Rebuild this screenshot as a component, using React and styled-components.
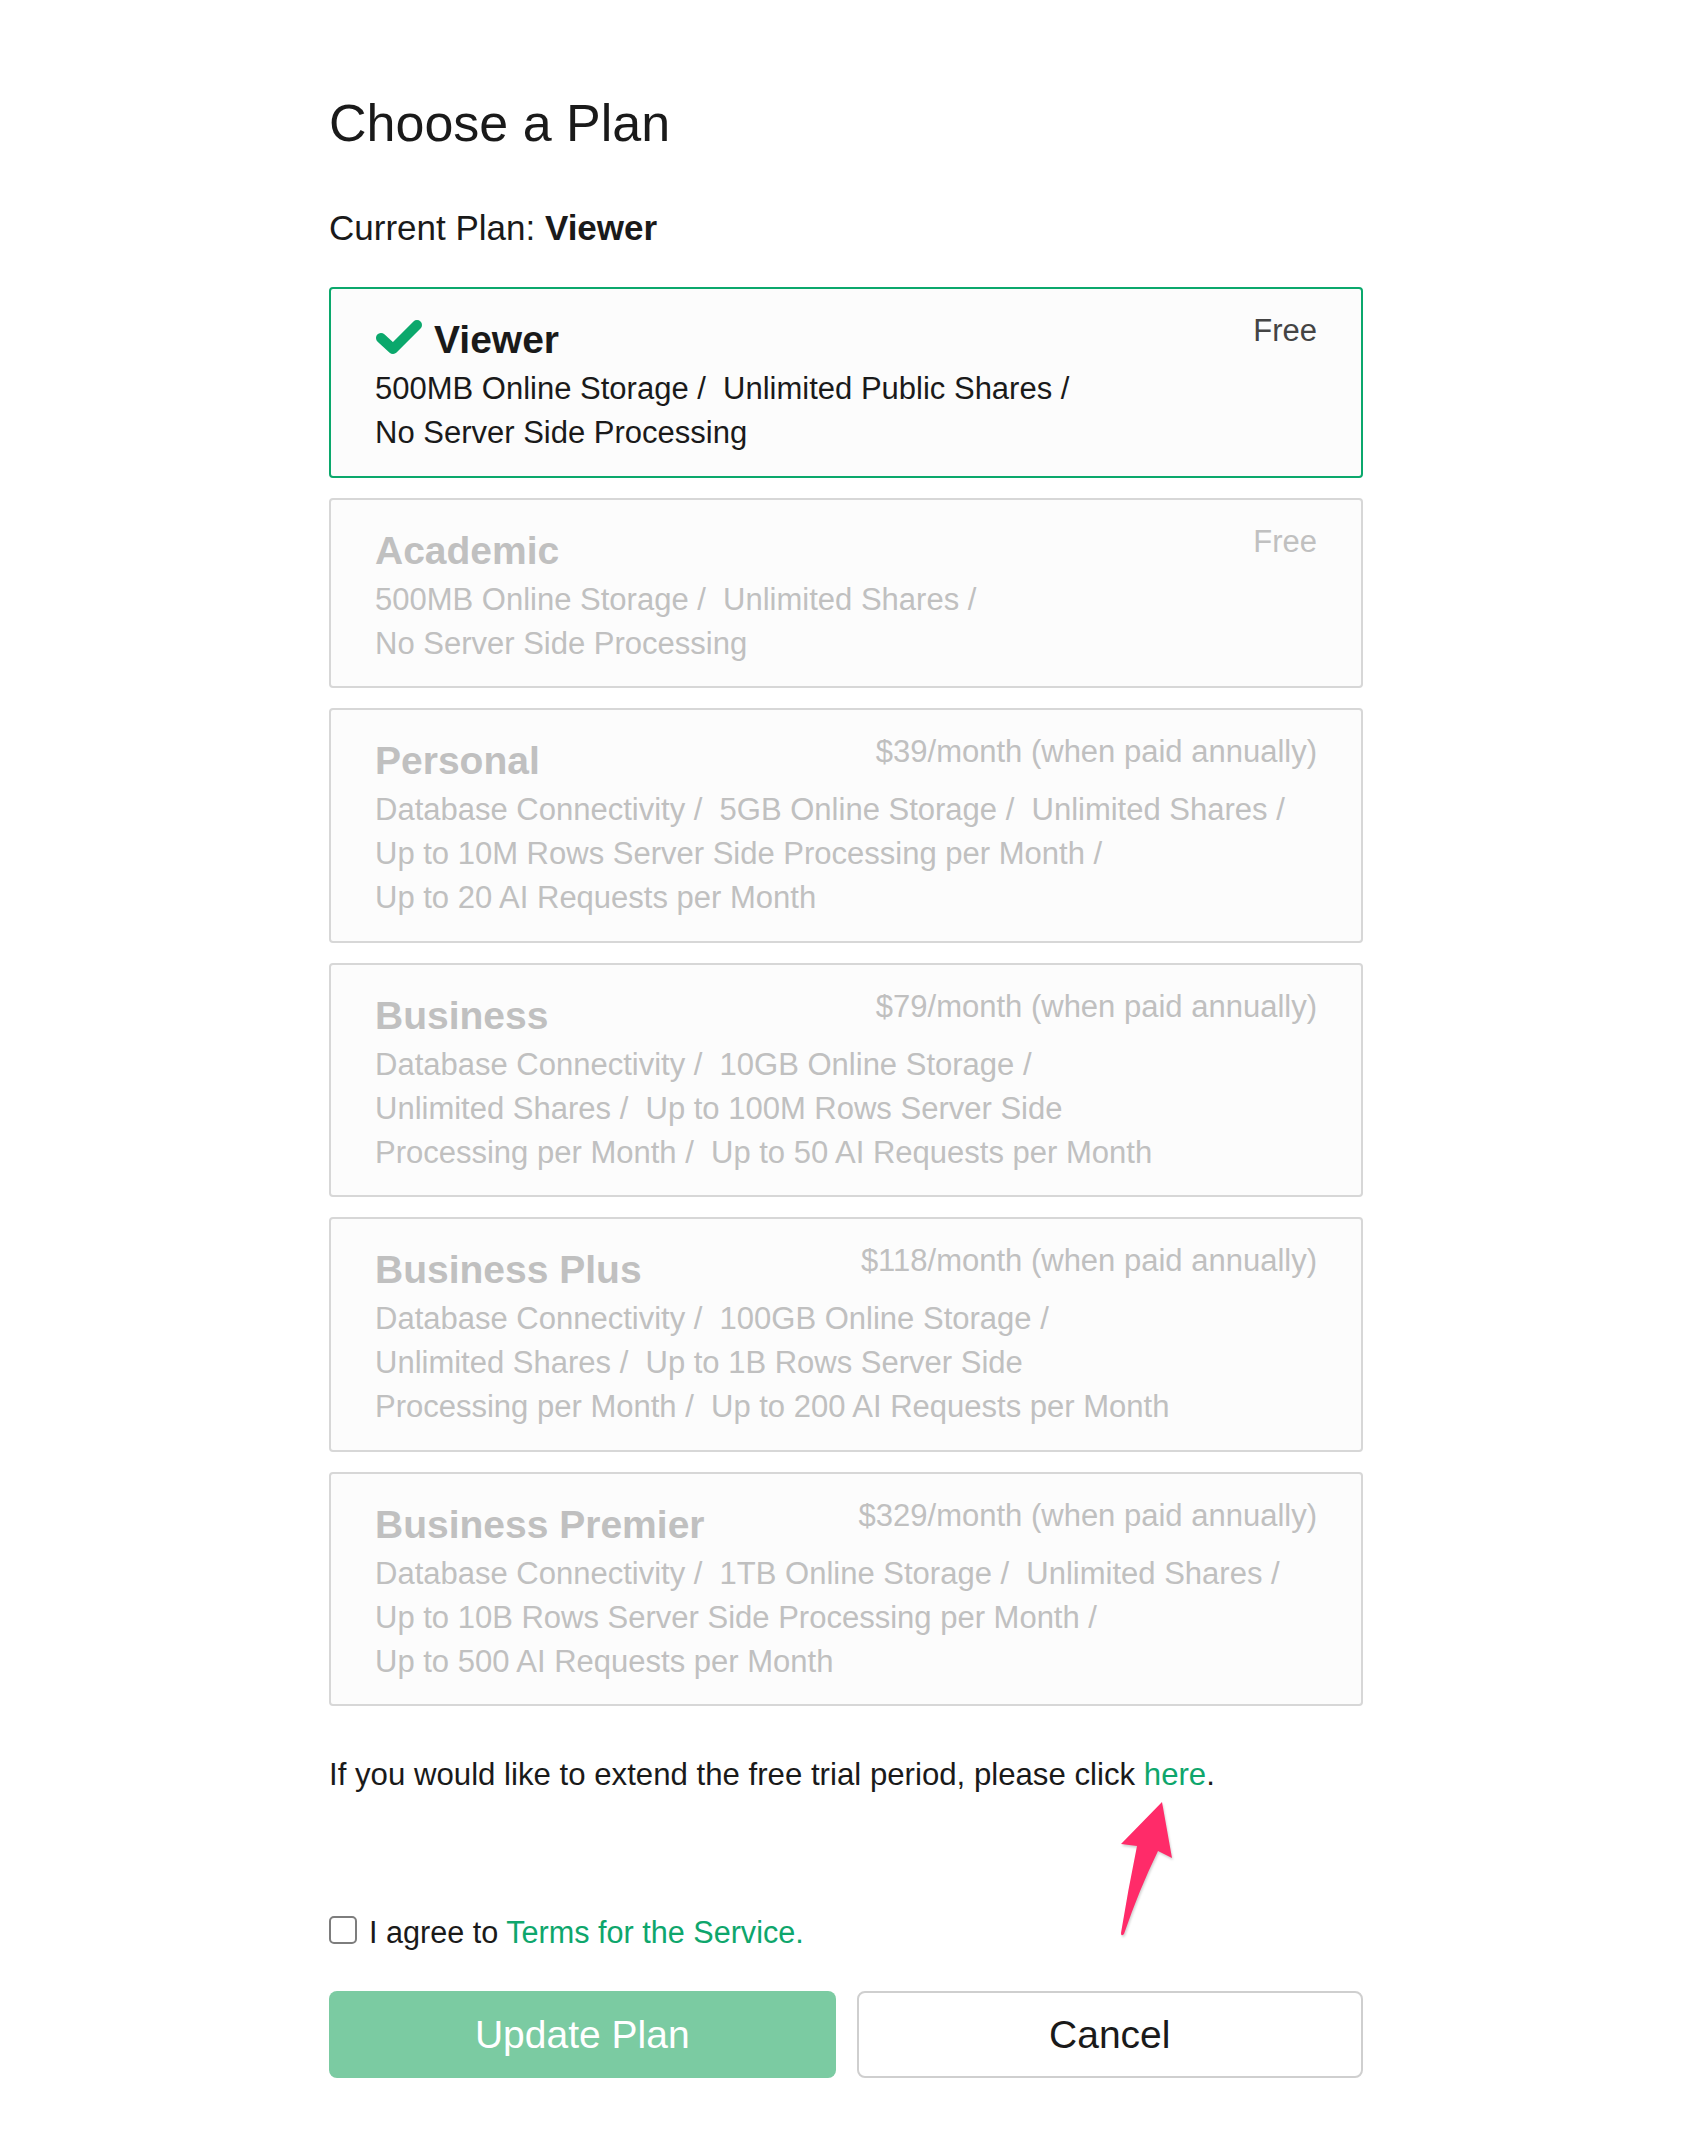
import styled, { createGlobalStyle } from 'styled-components';

const GlobalStyle = createGlobalStyle`
  body {
    margin: 0;
    background: #ffffff;
    font-family: 'Liberation Sans', Arial, Helvetica, sans-serif;
    color: #1a1a1a;
  }
`;

const Page = styled.div`
  width: 1034px;
  padding: 93px 0 40px 329px;
`;

const Title = styled.h1`
  margin: 0;
  font-size: 52px;
  line-height: 60px;
  font-weight: 400;
  color: #1a1a1a;
`;

const CurrentPlan = styled.p`
  margin: 53px 0 37px;
  font-size: 35px;
  line-height: 44px;

  b {
    font-weight: 700;
  }
`;

const PlanList = styled.div`
  display: flex;
  flex-direction: column;
  gap: 20px;
`;

const PlanCard = styled.div`
  border: 2px solid ${(p) => (p.$active ? '#0ba86c' : '#d7d7d7')};
  border-radius: 4px;
  background: #fcfcfc;
  padding: 24px 44px 20.5px;
  color: ${(p) => (p.$active ? '#1a1a1a' : '#c0c0c0')};
`;

const CardHeader = styled.div`
  display: flex;
  justify-content: space-between;
  align-items: flex-start;
`;

const PlanName = styled.div`
  display: flex;
  align-items: center;
  gap: 11px;
  font-size: 39px;
  line-height: 54px;
  font-weight: 700;
`;

const CheckIcon = styled.svg`
  width: 48px;
  height: 36px;
  flex-shrink: 0;
  margin-top: -6px;
`;

const Price = styled.div`
  font-size: 31px;
  line-height: 36px;
  color: ${(p) => (p.$active ? '#444444' : '#c0c0c0')};
`;

const Features = styled.div`
  font-size: 31px;
  line-height: 44px;
`;

const FeatureLine = styled.div`
  white-space: nowrap;
`;

const Notice = styled.p`
  position: relative;
  margin: 47px 0 0;
  font-size: 31.2px;
  line-height: 44px;
`;

const GreenLink = styled.a`
  color: #0ea66c;
  text-decoration: none;
  cursor: pointer;
`;

const Arrow = styled.svg`
  position: absolute;
  left: 786px;
  top: 45px;
  width: 62px;
  height: 142px;
  filter: drop-shadow(1px 2px 1px rgba(0, 0, 0, 0.18));
`;

const AgreeRow = styled.label`
  display: flex;
  align-items: center;
  gap: 12px;
  margin-top: 113px;
  font-size: 30.6px;
  line-height: 44px;
`;

const Checkbox = styled.input`
  appearance: none;
  margin: 0;
  width: 28px;
  height: 28px;
  border: 2px solid #7d7d7d;
  border-radius: 5px;
  background: #fff;
  transform: translateY(-2px);
`;

const ButtonRow = styled.div`
  display: grid;
  grid-template-columns: 1fr 1fr;
  gap: 21px;
  margin-top: 37px;
`;

const PrimaryButton = styled.button`
  height: 87px;
  border: none;
  border-radius: 8px;
  background: #7bcba2;
  color: #ffffff;
  font-family: inherit;
  font-size: 39px;
`;

const SecondaryButton = styled.button`
  height: 87px;
  border: 2px solid #cfcfcf;
  border-radius: 8px;
  background: #ffffff;
  color: #1a1a1a;
  font-family: inherit;
  font-size: 39px;
`;

const plans = [
  {
    name: 'Viewer',
    price: 'Free',
    active: true,
    lines: ['500MB Online Storage /\u00a0 Unlimited Public Shares /', 'No Server Side Processing'],
  },
  {
    name: 'Academic',
    price: 'Free',
    lines: ['500MB Online Storage /\u00a0 Unlimited Shares /', 'No Server Side Processing'],
  },
  {
    name: 'Personal',
    price: '$39/month (when paid annually)',
    lines: [
      'Database Connectivity /\u00a0 5GB Online Storage /\u00a0 Unlimited Shares /',
      'Up to 10M Rows Server Side Processing per Month /',
      'Up to 20 AI Requests per Month',
    ],
  },
  {
    name: 'Business',
    price: '$79/month (when paid annually)',
    lines: [
      'Database Connectivity /\u00a0 10GB Online Storage /',
      'Unlimited Shares /\u00a0 Up to 100M Rows Server Side',
      'Processing per Month /\u00a0 Up to 50 AI Requests per Month',
    ],
  },
  {
    name: 'Business Plus',
    price: '$118/month (when paid annually)',
    lines: [
      'Database Connectivity /\u00a0 100GB Online Storage /',
      'Unlimited Shares /\u00a0 Up to 1B Rows Server Side',
      'Processing per Month /\u00a0 Up to 200 AI Requests per Month',
    ],
  },
  {
    name: 'Business Premier',
    price: '$329/month (when paid annually)',
    lines: [
      'Database Connectivity /\u00a0 1TB Online Storage /\u00a0 Unlimited Shares /',
      'Up to 10B Rows Server Side Processing per Month /',
      'Up to 500 AI Requests per Month',
    ],
  },
];

function Check() {
  return (
    <CheckIcon viewBox="0 0 48 36">
      <polyline
        points="6,19 18,30 42,6"
        fill="none"
        stroke="#0ba86c"
        strokeWidth="10"
        strokeLinecap="round"
        strokeLinejoin="round"
      />
    </CheckIcon>
  );
}

export default function App() {
  return (
    <>
      <GlobalStyle />
      <Page>
        <Title>Choose a Plan</Title>
        <CurrentPlan>
          Current Plan: <b>Viewer</b>
        </CurrentPlan>

        <PlanList>
          {plans.map((plan) => (
            <PlanCard key={plan.name} $active={plan.active}>
              <CardHeader>
                <PlanName>
                  {plan.active && <Check />}
                  {plan.name}
                </PlanName>
                <Price $active={plan.active}>{plan.price}</Price>
              </CardHeader>
              <Features>
                {plan.lines.map((line) => (
                  <FeatureLine key={line}>{line}</FeatureLine>
                ))}
              </Features>
            </PlanCard>
          ))}
        </PlanList>

        <Notice>
          If you would like to extend the free trial period, please click <GreenLink>here</GreenLink>.
          <Arrow viewBox="0 0 62 142">
            <path
              d="M47 4 L57 60 L43 53 Q24 92 9 136 Q6 139 6 135 Q13 92 22 48 L6 46 Z"
              fill="#ff2b69"
            />
          </Arrow>
        </Notice>

        <AgreeRow>
          <Checkbox type="checkbox" />
          <span>
            I agree to <GreenLink>Terms for the Service.</GreenLink>
          </span>
        </AgreeRow>

        <ButtonRow>
          <PrimaryButton>Update Plan</PrimaryButton>
          <SecondaryButton>Cancel</SecondaryButton>
        </ButtonRow>
      </Page>
    </>
  );
}
